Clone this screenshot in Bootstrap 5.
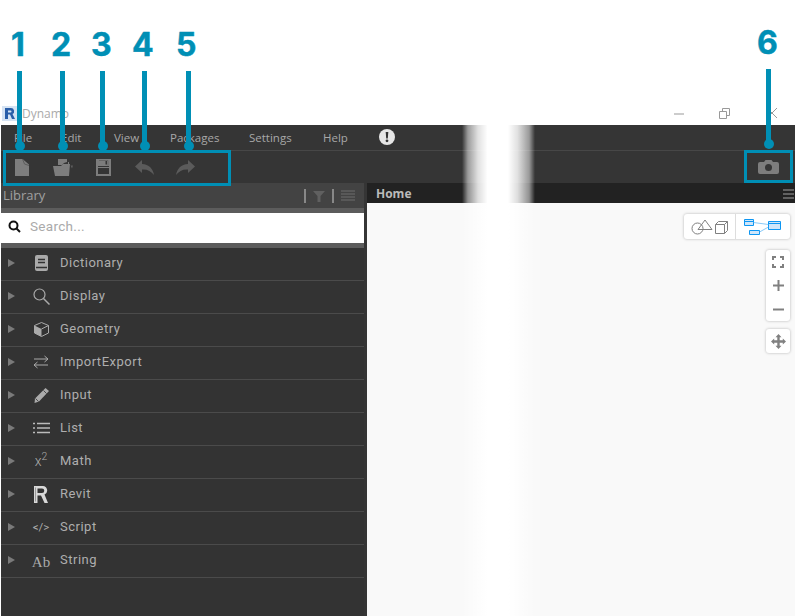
<!DOCTYPE html>
<html lang="en">
<head>
  <meta charset="UTF-8">
  <meta name="viewport" content="width=device-width, initial-scale=1">
  <title>Dynamo</title>
  <link href="https://cdn.jsdelivr.net/npm/bootstrap@5.3.0/dist/css/bootstrap.min.css" rel="stylesheet">
  <style>
    html, body { height: 616px; overflow: hidden; background: #fff; }
    body { position: relative; font-family: "Open Sans", sans-serif; font-size: 12px; color: #aaa; }
    .title-row { height: 125px; padding: 0 15px 0 2px; }
    .title-text { font-size: 12px; color: #aaa; line-height: 18px; margin-left: 5px; position: relative; top: 2px; }
    .win-btn { width: 16px; height: 16px; }
    .app-wrap { height: 491px; margin-left: 1px; background: #353535; }
    .menu-row { height: 26px; border-bottom: 1px solid #474747; padding-left: 13px; font-size: 11.5px; color: #a8a8a8; }
    .menu-row span { line-height: 25px; }
    .tool-row { height: 32px; }
    .tool-ico { position: absolute; top: 159px; }
    .main-row { height: 433px; }
    .side-pane { width: 363px; background: #333; }
    .lib-head { height: 25px; background: #434343; padding: 0 9px 0 2px; font-size: 13px; color: #a0a0a0; }
    .head-tools { gap: 7px; }
    .gray-strip { height: 5px; background: #5c5c5c; }
    .search-box { height: 30px; background: #fff; padding: 0 0 3px 7px; }
    .search-box span { font-family: Roboto, sans-serif; font-size: 13.5px; color: #aaa; margin-left: 9px; letter-spacing: .3px; }
    .lib-item { height: 33px; border-bottom: 1px solid #4b4b4b; font-family: Roboto, sans-serif; font-size: 13px; letter-spacing: .5px; color: #aeaeae; padding-bottom: 3px; }
    .lib-arrow { width: 0; height: 0; margin-left: 7px; border-left: 7px solid #7a7a7a; border-top: 4.5px solid transparent; border-bottom: 4.5px solid transparent; }
    .lib-ico { width: 30px; margin-left: 11px; margin-right: 4px; height: 20px; font-size: 13px; line-height: 20px; text-align: center; color: #aaa; letter-spacing: 0; }
    .split-bar { width: 3px; background: #353535; }
    .right-pane { width: 428px; }
    .home-tab { height: 20px; background: #222; padding: 1px 1px 0 9px; font-size: 12px; font-weight: 700; color: #bbb; }
    .canvas-area { height: 413px; background: #f9f9f9; padding: 11px 5px 0 0; }
    .tool-card { background: #fff; border-radius: 3px; box-shadow: 0 0 3px rgba(0,0,0,.28); }
    .toggle-card { width: 106px; height: 25px; }
    .toggle-left { width: 52px; border-right: 1px solid #ddd; }
    .zoom-card { width: 24px; height: 71px; margin-top: 11px; }
    .pan-card { width: 24px; height: 24px; margin-top: 8px; }
    .fade-top { position: absolute; left: 462px; top: 125px; width: 73px; height: 78px;
      background: linear-gradient(to right, rgba(255,255,255,0) 0, rgba(255,255,255,.5) 8%, rgba(255,255,255,.85) 22%, #fff 35%, #fff 63%, rgba(255,255,255,.85) 76%, rgba(255,255,255,.5) 92%, rgba(255,255,255,0) 100%); }
    .fade-low { position: absolute; left: 462px; top: 203px; width: 73px; height: 413px;
      background: linear-gradient(to right, rgba(255,255,255,0), #fff 35%, #fff 63%, rgba(255,255,255,0)); }
    .call-num { position: absolute; top: 25px; font-family: Inter, sans-serif; font-weight: 700; font-size: 32px; line-height: 39px; color: #008fb5; -webkit-text-stroke: .5px #008fb5; }
    .call-line { position: absolute; width: 5px; background: #008fb5; }
    .call-line::after { content: ""; position: absolute; left: -2.5px; bottom: -5px; width: 10px; height: 10px; border-radius: 50%; background: #008fb5; }
    .call-box { position: absolute; border: 3px solid #008fb5; }
  </style>
</head>
<body>

  <!-- window title -->
  <div class="title-row d-flex align-items-end">
    <svg width="15" height="15" viewBox="0 0 15 15" class="mb-1">
      <rect width="15" height="15" fill="#d5e3f3"/>
      <path d="M3 2h6a3.2 3.2 0 0 1 1.500 6l2.500 5h-3L8 8.500H6V13H3z M6 4.500V6.500h2.500a1 1 0 0 0 0-2z" fill="#2a5ea8" fill-rule="evenodd"/>
    </svg>
    <span class="title-text mb-1">Dynamo</span>
    <div class="ms-auto d-flex align-items-center mb-1">
      <svg class="win-btn" viewBox="0 0 16 16"><path d="M3 9h10" stroke="#999" stroke-width="1"/></svg>
      <svg class="win-btn" style="margin:0 32px 0 29px" viewBox="0 0 16 16"><path d="M3.500 6.500h7v7h-7z M6.500 6.500v-3h7v7h-3" fill="none" stroke="#999"/></svg>
      <svg class="win-btn" viewBox="0 0 16 16"><path d="M3 3l10 10M3 13L13 3" stroke="#999"/></svg>
    </div>
  </div>

  <div class="app-wrap d-flex flex-column">
    <div class="menu-row d-flex position-relative">
      <span style="width:47px">File</span>
      <span style="width:53px">Edit</span>
      <span style="width:56px">View</span>
      <span style="width:79px">Packages</span>
      <span style="width:74px">Settings</span>
      <span style="width:56px">Help</span>
      <svg width="16" height="16" viewBox="0 0 16 16" class="mt-1">
        <circle cx="8" cy="8" r="8" fill="#e6e6e6"/>
        <path d="M6.700 3h2.600l-.5 6.500H7.200z" fill="#333"/><circle cx="8" cy="11.800" r="1.400" fill="#333"/>
      </svg>
    </div>
    <div class="tool-row"></div>
    <div class="main-row d-flex">
      <div class="side-pane">
        <div class="lib-head d-flex align-items-center">
          <span>Library</span>
          <div class="ms-auto d-flex align-items-center head-tools">
            <svg width="2" height="14"><rect width="2" height="14" fill="#888"/></svg>
            <svg width="12" height="12" viewBox="0 0 12 12"><path d="M0 1h12L7.500 6v6h-3V6z" fill="#606060"/></svg>
            <svg width="2" height="14"><rect width="2" height="14" fill="#888"/></svg>
            <svg width="14" height="11" viewBox="0 0 14 11"><path d="M0 1h14M0 4h14M0 7h14M0 10h14" stroke="#606060" stroke-width="1.500"/></svg>
          </div>
        </div>
        <div class="gray-strip"></div>
        <div class="search-box d-flex align-items-center">
          <svg width="13" height="13" viewBox="0 0 13 13"><circle cx="5.500" cy="5.500" r="4" fill="none" stroke="#111" stroke-width="2"/><path d="M8.500 8.500l3.500 3.500" stroke="#111" stroke-width="2"/></svg>
          <span>Search...</span>
        </div>
        <div class="gray-strip"></div>

        <div class="lib-item d-flex align-items-center">
          <div class="lib-arrow"></div>
          <div class="lib-ico"><svg width="13" height="16" viewBox="0 0 13 16"><path d="M2 0h9a2 2 0 0 1 2 2v12a2 2 0 0 1-2 2H2a2 2 0 0 1-2-2V2a2 2 0 0 1 2-2z" fill="#aaa"/><path d="M3 4.500h7M3 7.500h7M1 12.500h11" stroke="#333" stroke-width="1.300"/></svg></div>
          <span>Dictionary</span>
        </div>
        <div class="lib-item d-flex align-items-center">
          <div class="lib-arrow"></div>
          <div class="lib-ico"><svg width="17" height="17" viewBox="0 0 17 17"><circle cx="6.500" cy="6.500" r="5.500" fill="none" stroke="#aaa" stroke-width="1.200"/><path d="M10.500 10.500l6 6" stroke="#aaa" stroke-width="1.500"/></svg></div>
          <span>Display</span>
        </div>
        <div class="lib-item d-flex align-items-center">
          <div class="lib-arrow"></div>
          <div class="lib-ico"><svg width="15" height="15" viewBox="0 0 15 15"><path d="M7.500.5l7 3v7.500l-7 3.500-7-3.500V3.500z" fill="none" stroke="#aaa"/><path d="M.5 3.500l7 3.500v7.500l-7-3.500z" fill="#aaa"/><path d="M7.500 7l7-3.500" stroke="#aaa"/></svg></div>
          <span>Geometry</span>
        </div>
        <div class="lib-item d-flex align-items-center">
          <div class="lib-arrow"></div>
          <div class="lib-ico"><svg width="16" height="14" viewBox="0 0 16 14"><path d="M1 4h14M11.500 1L15 4l-3.500 3M15 10H1M4.500 7L1 10l3.500 3" fill="none" stroke="#aaa"/></svg></div>
          <span>ImportExport</span>
        </div>
        <div class="lib-item d-flex align-items-center">
          <div class="lib-arrow"></div>
          <div class="lib-ico"><svg width="15" height="15" viewBox="0 0 15 15"><path d="M11.500 0L15 3 5 13.500.5 15l.5-4.500z" fill="#aaa"/><path d="M9.500 2.500l3 3M1.500 10.500l3 3" stroke="#333" stroke-width=".8"/></svg></div>
          <span>Input</span>
        </div>
        <div class="lib-item d-flex align-items-center">
          <div class="lib-arrow"></div>
          <div class="lib-ico"><svg width="17" height="12" viewBox="0 0 17 12"><path d="M0 1.500h2M0 6h2M0 10.500h2M4 1.500h13M4 6h13M4 10.500h13" stroke="#bbb" stroke-width="1.600"/></svg></div>
          <span>List</span>
        </div>
        <div class="lib-item d-flex align-items-center">
          <div class="lib-arrow"></div>
          <div class="lib-ico" style="font-size:14px;font-weight:300">x<sup>2</sup></div>
          <span>Math</span>
        </div>
        <div class="lib-item d-flex align-items-center">
          <div class="lib-arrow"></div>
          <div class="lib-ico"><svg width="14" height="17" viewBox="0 0 14 17"><path d="M0 0h8.500a4.500 4.500 0 0 1 2 8.600L14 17h-3.500L7 9.500H3.500V17H0z M3.500 2.500v4.500h4.500a2.200 2.200 0 0 0 0-4.500z" fill="#d8d8d8" fill-rule="evenodd"/><path d="M1.500 1.500v14" stroke="#999" stroke-width="1"/></svg></div>
          <span>Revit</span>
        </div>
        <div class="lib-item d-flex align-items-center">
          <div class="lib-arrow"></div>
          <div class="lib-ico" style="font-size:11.5px">&lt;/&gt;</div>
          <span>Script</span>
        </div>
        <div class="lib-item d-flex align-items-center">
          <div class="lib-arrow"></div>
          <div class="lib-ico" style="font-family:'Liberation Serif',serif;font-size:15px;padding-top:2px">Ab</div>
          <span>String</span>
        </div>
      </div>
      <div class="split-bar"></div>
      <div class="right-pane">
        <div class="home-tab d-flex align-items-center justify-content-between">
          <span>Home</span>
          <svg width="11" height="10" viewBox="0 0 11 10"><path d="M0 1h11M0 5h11M0 9h11" stroke="#777" stroke-width="1.500"/></svg>
        </div>
        <div class="canvas-area d-flex flex-column align-items-end">
          <div class="tool-card toggle-card d-flex">
            <div class="toggle-left d-flex align-items-center justify-content-center">
              <svg width="38" height="16" viewBox="0 0 38 16"><g fill="none" stroke="#808080"><circle cx="6.500" cy="9.500" r="5.500"/><path d="M7 10.500L14 1l7 9.500z"/><path d="M24.500 5.500h9v9h-9z M24.500 5.500l3-3h9l-3 3 M36.500 2.500v9l-3 3"/></g></svg>
            </div>
            <div class="flex-grow-1 d-flex align-items-center justify-content-center">
              <svg width="38" height="16" viewBox="0 0 38 16"><g stroke="#0d96f2"><path d="M.500.500h9v6h-9z" fill="#cfe6fa"/><path d="M24.500 2.500h12v8h-12z" fill="#cfe6fa"/><path d="M5.500 11.500h10v4h-10z" fill="#cfe6fa"/><path d="M.5 2.500h9M24.500 4.500h12" fill="none"/><path d="M9.500 3.500l15 2M15.500 13l9-5" fill="none" stroke="#6cbdf5" stroke-width=".8"/></g></svg>
            </div>
          </div>
          <div class="tool-card zoom-card d-flex flex-column align-items-center justify-content-around">
            <svg width="12" height="12" viewBox="0 0 12 12"><path d="M1 4V1h3M8 1h3v3M11 8v3H8M4 11H1V8" fill="none" stroke="#808080" stroke-width="2"/></svg>
            <svg width="11" height="11" viewBox="0 0 11 11"><path d="M5.500 0v11M0 5.500h11" stroke="#808080" stroke-width="2"/></svg>
            <svg width="11" height="11" viewBox="0 0 11 11"><path d="M0 5.500h11" stroke="#808080" stroke-width="2"/></svg>
          </div>
          <div class="tool-card pan-card d-flex align-items-center justify-content-center">
            <svg width="15" height="15" viewBox="0 0 15 15"><path d="M7.500 0l3 3.200H8.700v3.100h3.100V4.500L15 7.500l-3.200 3V8.700H8.700v3.100h1.800l-3 3.200-3-3.200h1.800V8.700H3.200v1.800L0 7.500l3.200-3v1.800h3.100V3.200H4.500z" fill="#808080"/></svg>
          </div>
        </div>
      </div>
    </div>
  </div>

  <!-- toolbar icons -->
  <svg class="tool-ico" style="left:15px" width="14" height="17" viewBox="0 0 14 17"><path d="M0 0h7.500L14 5.500V17H0z" fill="#7d7d7d"/><path d="M7.500 0l2 5 4.500 1.500" fill="none" stroke="#5c5c5c"/></svg>
  <svg class="tool-ico" style="left:53px" width="20" height="17" viewBox="0 0 20 17"><path d="M5 6V0h9v3l-3 1-2 2z" fill="#7d7d7d"/><path d="M15 3h1v3h-1z" fill="#7d7d7d"/><path d="M0 7h8l2-2h7l-1 12H2z" fill="#7d7d7d"/><path d="M17.500 6.500h2.500l-1 3z" fill="#5f5f5f"/></svg>
  <svg class="tool-ico" style="left:96px" width="15" height="17" viewBox="0 0 15 17"><path d="M0 0h15v17H0z M2 9v6h11V9z" fill="#7d7d7d" fill-rule="evenodd"/><path d="M2 7.500h11" stroke="#353535"/><path d="M3 1.500h9v5" fill="none" stroke="#5c5c5c" stroke-width=".7"/><path d="M9.500 2h1.500v3.500H9.500z" fill="#353535"/></svg>
  <svg class="tool-ico" style="left:135px;top:160px" width="19" height="15" viewBox="0 0 19 15"><path d="M7 0v4c7 0 11 5 12 11-3-4-7-6-12-5.500V13L0 6.500z" fill="#5b5b5b"/></svg>
  <svg class="tool-ico" style="left:176px;top:160px" width="19" height="15" viewBox="0 0 19 15"><path d="M12 0v4C5 4 1 9 0 15c3-4 7-6 12-5.500V13l7-6.500z" fill="#5b5b5b"/></svg>
  <svg class="tool-ico" style="left:758px;top:160px" width="21" height="14" viewBox="0 0 21 14"><path d="M2 2h4l1.500-2h6L15 2h4a2 2 0 0 1 2 2v8a2 2 0 0 1-2 2H2a2 2 0 0 1-2-2V4a2 2 0 0 1 2-2z" fill="#7d7d7d"/><circle cx="10.500" cy="7.500" r="3.500" fill="#353535"/></svg>

  <!-- white gap in the screenshot -->
  <div class="fade-top"></div>
  <div class="fade-low"></div>

  <!-- callouts -->
  <div class="call-num" style="left:11px">1</div>
  <div class="call-num" style="left:51px">2</div>
  <div class="call-num" style="left:91px">3</div>
  <div class="call-num" style="left:132px">4</div>
  <div class="call-num" style="left:176px">5</div>
  <div class="call-num" style="left:757px;top:23px">6</div>
  <div class="call-line" style="left:17px;top:71px;height:75px"></div>
  <div class="call-line" style="left:60px;top:71px;height:75px"></div>
  <div class="call-line" style="left:100px;top:71px;height:75px"></div>
  <div class="call-line" style="left:142px;top:71px;height:75px"></div>
  <div class="call-line" style="left:186px;top:71px;height:75px"></div>
  <div class="call-line" style="left:766px;top:69px;height:75px"></div>
  <div class="call-box" style="left:3px;top:150px;width:228px;height:36px"></div>
  <div class="call-box" style="left:744px;top:150px;width:49px;height:33px"></div>

  <script src="https://cdn.jsdelivr.net/npm/bootstrap@5.3.0/dist/js/bootstrap.bundle.min.js"></script>
</body>
</html>
